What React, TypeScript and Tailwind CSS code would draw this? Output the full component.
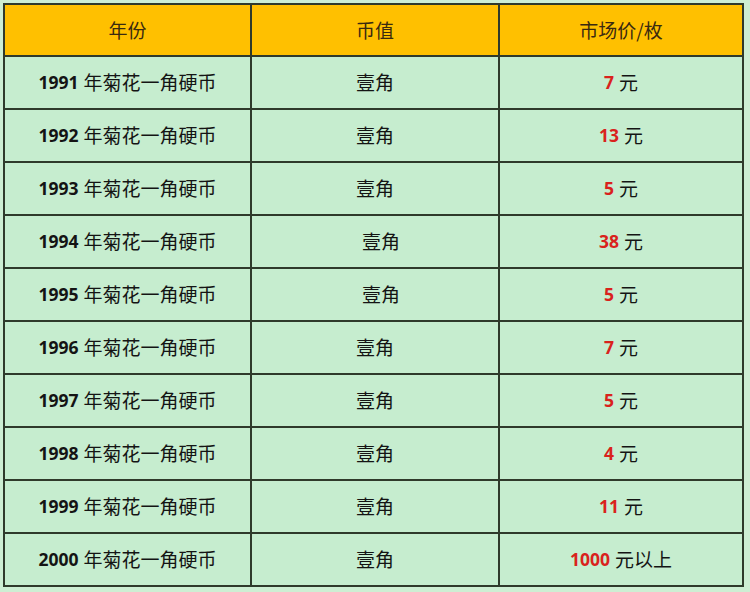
const rows = [
  { year: "1991", price: "7", suffix: "元", shift: false },
  { year: "1992", price: "13", suffix: "元", shift: false },
  { year: "1993", price: "5", suffix: "元", shift: false },
  { year: "1994", price: "38", suffix: "元", shift: true },
  { year: "1995", price: "5", suffix: "元", shift: true },
  { year: "1996", price: "7", suffix: "元", shift: false },
  { year: "1997", price: "5", suffix: "元", shift: false },
  { year: "1998", price: "4", suffix: "元", shift: false },
  { year: "1999", price: "11", suffix: "元", shift: false },
  { year: "2000", price: "1000", suffix: "元以上", shift: false },
];

const cjk = "font-['Noto_Sans_CJK_SC',sans-serif]";
const num = "font-['Open_Sans','Noto_Sans_CJK_SC',sans-serif] font-bold";

export default function App() {
  return (
    <div className="w-[750px] h-[592px] bg-[#cdeed3] pt-[3px] pl-[3px] overflow-hidden">
      <div className="grid grid-cols-[245px_246px_242px] grid-rows-[50px_repeat(10,51px)] gap-[2px] p-[2px] w-fit bg-[#2f3a2b]">
        {["年份", "币值", "市场价/枚"].map((h) => (
          <div
            key={h}
            className={`bg-[#ffc000] flex items-center justify-center text-[19px] text-[#3a2a10] ${cjk}`}
          >
            {h}
          </div>
        ))}
        {rows.map((r) => (
          <div key={r.year} className="contents">
            <div className="bg-[#c6edcf] flex items-center justify-center text-[19px] text-[#141414]">
              <span className={`${num} text-[17.5px] mr-[5px]`}>{r.year}</span>
              <span className={cjk}>年菊花一角硬币</span>
            </div>
            <div
              className={`bg-[#c6edcf] flex items-center justify-center text-[19px] text-[#141414] ${cjk} ${
                r.shift ? "pl-[12px]" : ""
              }`}
            >
              壹角
            </div>
            <div className="bg-[#c6edcf] flex items-center justify-center text-[19px] text-[#141414]">
              <span className={`${num} text-[17.5px] text-[#d9221c] mr-[5px]`}>{r.price}</span>
              <span className={cjk}>{r.suffix}</span>
            </div>
          </div>
        ))}
      </div>
    </div>
  );
}
